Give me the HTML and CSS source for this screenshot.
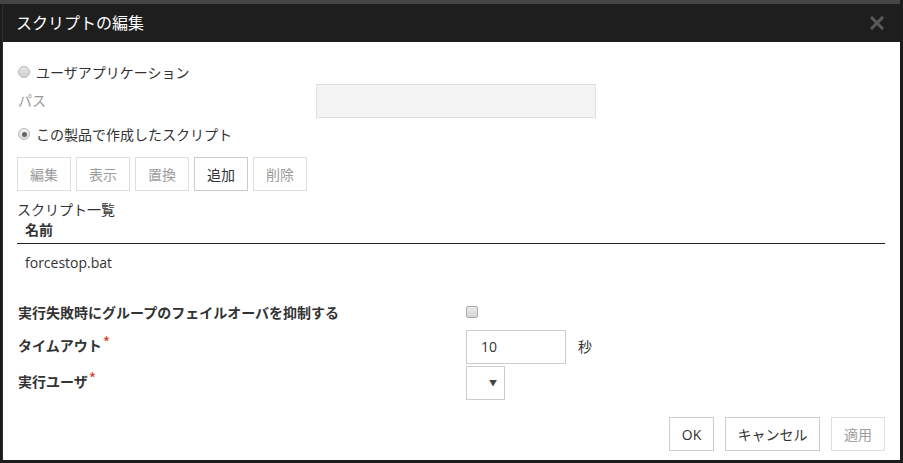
FILE: index.html
```html
<!DOCTYPE html>
<html lang="ja">
<head>
<meta charset="utf-8">
<link rel="stylesheet" href="styles.css">
</head>
<body>
<div class="backdrop-strip"></div>
<div class="dialog">
  <div class="dialog-header">
    <div class="dialog-title">スクリプトの編集</div>
    <div class="close">
      <svg width="14" height="14" viewBox="0 0 14 14"><path d="M2 2 L12 12 M12 2 L2 12" stroke="#5a5a5a" stroke-width="3" stroke-linecap="square"/></svg>
    </div>
  </div>
  <div class="dialog-body">
    <div class="radio-row first">
      <span class="radio"></span><span class="radio-label">ユーザアプリケーション</span>
    </div>
    <div class="path-row">
      <span class="path-label">パス</span>
      <div class="path-input"></div>
    </div>
    <div class="radio-row">
      <span class="radio checked"><span class="dot"></span></span><span class="radio-label">この製品で作成したスクリプト</span>
    </div>
    <div class="tool-buttons">
      <button class="btn disabled">編集</button>
      <button class="btn disabled">表示</button>
      <button class="btn disabled">置換</button>
      <button class="btn">追加</button>
      <button class="btn disabled">削除</button>
    </div>
    <div class="list-title">スクリプト一覧</div>
    <div class="table">
      <div class="table-head">名前</div>
      <div class="table-row">forcestop.bat</div>
    </div>
    <div class="form">
      <div class="form-label first-label">実行失敗時にグループのフェイルオーバを抑制する</div>
      <div class="form-control"><span class="checkbox"></span></div>
      <div class="form-label">タイムアウト<span class="req">*</span></div>
      <div class="form-control"><div class="text-input">10</div><span class="unit">秒</span></div>
      <div class="form-label">実行ユーザ<span class="req">*</span></div>
      <div class="form-control"><div class="select"><span class="arrow">▼</span></div></div>
    </div>
    <div class="footer">
      <button class="btn ok">OK</button>
      <button class="btn cancel">キャンセル</button>
      <button class="btn disabled">適用</button>
    </div>
  </div>
</div>
</body>
</html>
```
FILE: styles.css
```css
html, body {
  margin: 0;
  padding: 0;
}
body {
  width: 903px;
  height: 463px;
  background: #1c1c1c;
  font-family: "Noto Sans CJK JP", "Open Sans", sans-serif;
  overflow: hidden;
}
.backdrop-strip {
  height: 4px;
  background: #454545;
  width: 900px;
}
.dialog {
  margin-left: 2px;
  width: 898px;
  height: 456px;
  background: #fff;
  display: flex;
  flex-direction: column;
  border-left: 1px solid #2e2e2e;
  box-sizing: border-box;
}
.dialog-header {
  height: 38px;
  background: #1e1e1e;
  display: flex;
  align-items: center;
  justify-content: space-between;
  padding: 0 16px 0 13px;
  flex-shrink: 0;
}
.dialog-title {
  color: #fff;
  font-size: 16px;
  line-height: 20px;
  margin-top: -2px;
}
.close {
  width: 14px;
  height: 14px;
  display: flex;
}
.dialog-body {
  padding: 0 14px 0 14px;
  flex: 1;
  display: flex;
  flex-direction: column;
  font-size: 14px;
  color: #333;
}
.radio-row {
  display: flex;
  align-items: center;
  height: 20px;
  margin-top: 6px;
}
.radio-row.first {
  margin-top: 20px;
}
.radio {
  width: 10px;
  height: 10px;
  border-radius: 50%;
  border: 1px solid #b8b8b8;
  background: linear-gradient(#e6e6e6, #cfcfcf);
  margin-left: 1px;
  margin-right: 6px;
  display: flex;
  align-items: center;
  justify-content: center;
}
.radio.checked {
  background: linear-gradient(#f2f2f2, #dcdcdc);
}
.dot {
  width: 5px;
  height: 5px;
  border-radius: 50%;
  background: #666;
}
.radio-label {
  line-height: 20px;
}
.path-row {
  display: flex;
  align-items: center;
  height: 34px;
  margin-top: 2px;
}
.path-label {
  color: #999;
  width: 298px;
  padding-left: 1px;
  margin-top: -2px;
}
.path-input {
  width: 278px;
  height: 32px;
  background: #f4f4f4;
  border: 1px solid #e0e0e0;
}
.tool-buttons {
  display: flex;
  gap: 5px;
  margin-top: 13px;
}
.btn {
  font-family: "Noto Sans CJK JP", "Open Sans", sans-serif;
  font-size: 14px;
  height: 34px;
  width: 54px;
  background: #fff;
  border: 1px solid #ccc;
  color: #333;
  padding: 0;
  margin: 0;
  box-sizing: border-box;
}
.btn.disabled {
  color: #9c9c9c;
  border-color: #dedede;
}
.list-title {
  margin-top: 8px;
  line-height: 20px;
}
.table {
  margin-right: 1px;
}
.table-head {
  font-weight: bold;
  line-height: 20px;
  padding: 0 0 4px 8px;
  border-bottom: 1px solid #222;
}
.table-row {
  font-family: "Open Sans", "Noto Sans CJK JP", sans-serif;
  line-height: 20px;
  padding: 9px 0 0 8px;
  height: 30px;
  box-sizing: border-box;
}
.form {
  display: grid;
  grid-template-columns: 449px auto;
  grid-template-rows: 36px 34px 34px;
  row-gap: 2px;
  margin-top: 18px;
  align-items: center;
}
.form-label {
  font-weight: bold;
  padding-left: 1px;
  margin-top: -4px;
}
.form-label.first-label {
  margin-top: 4px;
}
.req {
  color: #d9401e;
  font-weight: normal;
  vertical-align: top;
  font-size: 16px;
  line-height: 14px;
  margin-left: 1px;
}
.form-control {
  display: flex;
  align-items: center;
}
.checkbox {
  width: 10px;
  height: 10px;
  border: 1px solid #aaa;
  border-radius: 2px;
  background: linear-gradient(#eaeaea, #d6d6d6);
  margin-top: 4px;
}
.text-input {
  width: 100px;
  height: 34px;
  box-sizing: border-box;
  border: 1px solid #ccc;
  padding-left: 14px;
  line-height: 32px;
  font-family: "Open Sans", sans-serif;
  font-size: 14px;
  color: #333;
}
.unit {
  margin-left: 12px;
  margin-top: -2px;
}
.select {
  width: 39px;
  height: 34px;
  box-sizing: border-box;
  border: 1px solid #ccc;
  position: relative;
}
.arrow {
  position: absolute;
  right: 7px;
  top: 10px;
  font-size: 8px;
  color: #444;
}
.footer {
  display: flex;
  justify-content: flex-end;
  gap: 11px;
  margin-top: 17px;
  padding-right: 1px;
}
.btn.ok {
  width: 45px;
  font-family: "Open Sans", sans-serif;
}
.btn.cancel {
  width: 95px;
}
```
